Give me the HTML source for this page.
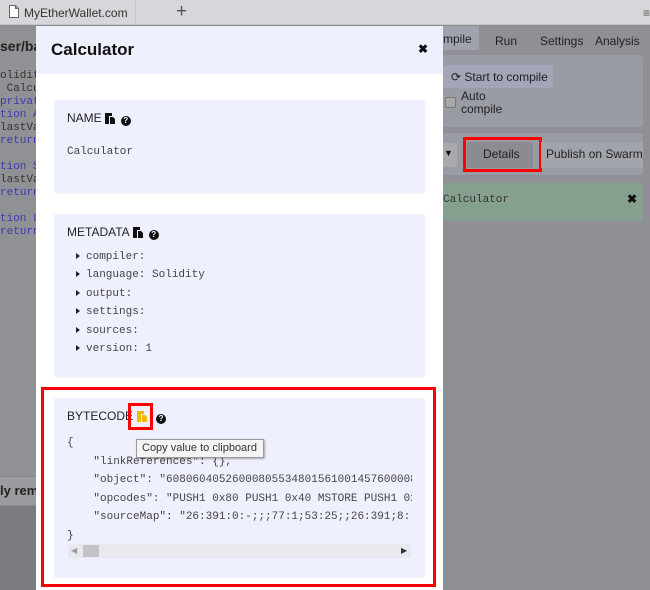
<!DOCTYPE html>
<html><head><meta charset="utf-8"><style>
*{box-sizing:border-box;margin:0;padding:0}
body{width:650px;height:590px;overflow:hidden;position:relative;font-family:"Liberation Sans",sans-serif;background:#8e8f93}
.abs{position:absolute}
.mono{font-family:"Liberation Mono",monospace}
.card{position:absolute;left:54px;width:371px;background:#eef0fd;border-radius:2px}
.lbl{font-size:12px;color:#222;position:absolute;left:13px}
.ic{display:inline-block;vertical-align:-2px;margin-left:3px}
.q{display:inline-block;width:10px;height:10px;border-radius:50%;background:#111;color:#fff;font-size:8px;font-weight:bold;text-align:center;line-height:10px;vertical-align:-1px;margin-left:6px}
.meta div{font-size:11px;color:#444;height:18.4px;line-height:18px}
.meta div:before{content:"";display:inline-block;border-left:4px solid #222;border-top:3.5px solid transparent;border-bottom:3.5px solid transparent;margin-right:6px;vertical-align:0}
</style></head><body>
<div class="abs" style="left:0;top:0;width:650px;height:25px;background:#d6d7da;border-bottom:1px solid #c4c5c8"></div>
<div class="abs" style="left:135px;top:0;width:1px;height:25px;background:#c2c3c6"></div>
<svg class="abs" style="left:9px;top:5px" width="10" height="13"><path d="M.5 .5h6l3 3v9h-9z M6.5 .5v3h3" fill="#fff" stroke="#666"/></svg>
<div class="abs" style="left:24px;top:6px;font-size:12px;color:#333">MyEtherWallet.com</div>
<div class="abs" style="left:176px;top:1px;font-size:19px;color:#555">+</div>
<div class="abs" style="left:643px;top:6px;font-size:12px;color:#555">≡</div>
<div class="abs" style="left:0;top:26px;width:36px;height:450px;background:#909194"></div>
<div class="abs" style="left:0;top:38px;font-size:14px;font-weight:bold;color:#222">ser/ba</div>
<div class="abs mono" style="left:0;top:70px;font-size:11px;line-height:13px;color:#333;white-space:pre">olidit
 Calcu
<span style="color:#3b3bb0">privat</span>
<span style="color:#3b3bb0">tion A</span>
lastVa
<span style="color:#3b3bb0">return</span>

<span style="color:#3b3bb0">tion S</span>
lastVa
<span style="color:#3b3bb0">return</span>

<span style="color:#3b3bb0">tion L</span>
<span style="color:#3b3bb0">return</span></div>
<div class="abs" style="left:0;top:476px;width:36px;height:30px;background:#9b9c9f;border-top:1px solid #888;border-bottom:1px solid #888"></div>
<div class="abs" style="left:0;top:483px;font-size:13px;font-weight:bold;color:#222">ly remi</div>
<div class="abs" style="left:0;top:506px;width:36px;height:84px;background:#7b7c7f"></div>
<div class="abs" style="left:443px;top:26px;width:207px;height:564px;background:#8f9096"></div>
<div class="abs" style="left:443px;top:26px;width:36px;height:24px;background:#a0a3ae"></div>
<div class="abs" style="left:443px;top:32px;font-size:12px;color:#222">mpile</div>
<div class="abs" style="left:495px;top:34px;font-size:12px;color:#222">Run</div>
<div class="abs" style="left:540px;top:34px;font-size:12px;color:#222">Settings</div>
<div class="abs" style="left:595px;top:34px;font-size:12px;color:#222">Analysis</div>
<div class="abs" style="left:443px;top:55px;width:200px;height:72px;background:#9a9ca5;border-radius:3px"></div>
<div class="abs" style="left:443px;top:65px;width:110px;height:23px;background:#a2a6b7;border-radius:3px"></div>
<div class="abs" style="left:451px;top:70px;font-size:12px;color:#222">⟳ Start to compile</div>
<div class="abs" style="left:445px;top:97px;width:11px;height:11px;background:#a8a8a8;border:1px solid #777;border-radius:2px"></div>
<div class="abs" style="left:461px;top:90px;font-size:12px;line-height:13px;color:#222">Auto<br>compile</div>
<div class="abs" style="left:443px;top:133px;width:200px;height:42px;background:#9a9ca5;border-radius:3px"></div>
<div class="abs" style="left:443px;top:143px;width:14px;height:24px;background:#a9a9ad;border-radius:0 3px 3px 0"></div>
<div class="abs" style="left:444px;top:148px;font-size:9px;color:#111">▼</div>
<div class="abs" style="left:467px;top:142px;width:66px;height:26px;background:#8b8c91;border-radius:2px"></div>
<div class="abs" style="left:463px;top:137px;width:79px;height:35px;border:3px solid #f00"></div>
<div class="abs" style="left:483px;top:147px;font-size:12px;color:#222">Details</div>
<div class="abs" style="left:541px;top:142px;width:102px;height:26px;background:#a2a4ab"></div>
<div class="abs" style="left:546px;top:147px;font-size:12px;color:#222">Publish on Swarm</div>
<div class="abs" style="left:443px;top:183px;width:200px;height:38px;background:#86a08f;border-radius:4px"></div>
<div class="abs mono" style="left:443px;top:194px;font-size:11px;color:#333">Calculator</div>
<div class="abs" style="left:627px;top:192px;font-size:12px;font-weight:bold;color:#111">✖</div>
<div class="abs" style="left:36px;top:26px;width:407px;height:564px;background:#fff"></div>
<div class="abs" style="left:36px;top:26px;width:407px;height:48px;background:#eef0fd"></div>
<div class="abs" style="left:51px;top:40px;font-size:17px;font-weight:bold;color:#111">Calculator</div>
<div class="abs" style="left:418px;top:42px;font-size:12px;font-weight:bold;color:#111">✖</div>

<div class="card" style="top:100px;height:93px">
 <div class="lbl" style="top:11px">NAME<svg class="ic" width="10" height="12"><path d="M0 1h7v3h-3v8h-4z M5 5h3l2 2v5h-5z" fill="#111"/></svg><span class="q">?</span></div>
 <div class="abs mono" style="left:13px;top:46px;font-size:11px;color:#444">Calculator</div>
</div>
<div class="card" style="top:214px;height:163px">
 <div class="lbl" style="top:11px">METADATA<svg class="ic" width="10" height="12"><path d="M0 1h7v3h-3v8h-4z M5 5h3l2 2v5h-5z" fill="#111"/></svg><span class="q">?</span></div>
 <div class="meta mono abs" style="left:22px;top:34px">
  <div>compiler:</div><div>language: Solidity</div><div>output:</div><div>settings:</div><div>sources:</div><div>version: 1</div>
 </div>
</div>
<div class="abs" style="left:41px;top:387px;width:395px;height:200px;border:3px solid #f00"></div>
<div class="card" style="top:398px;height:180px">
 <div class="lbl" style="top:11px">BYTECODE<svg class="ic" width="10" height="12" style="margin-left:4px"><path d="M0 1h7v3h-3v8h-4z M5 5h3l2 2v5h-5z" fill="#f5b700"/></svg><span class="q" style="margin-left:9px">?</span></div>
 <div class="abs" style="left:74px;top:5px;width:25px;height:27px;border:3px solid #f00"></div>
 <pre class="abs mono" style="left:13px;top:36px;font-size:11px;line-height:18.5px;color:#444;width:345px;overflow:hidden">{
    "linkReferences": {},
    "object": "608060405260008055348015610014576000080
    "opcodes": "PUSH1 0x80 PUSH1 0x40 MSTORE PUSH1 0x0
    "sourceMap": "26:391:0:-;;;77:1;53:25;;26:391;8:
}</pre>
 <div class="abs" style="left:14px;top:146px;width:343px;height:14px;background:#e8e9ef"></div>
 <div class="abs" style="left:17px;top:148px;font-size:8px;color:#999">◀</div>
 <div class="abs" style="left:29px;top:147px;width:16px;height:12px;background:#c2c3c8"></div>
 <div class="abs" style="left:347px;top:148px;font-size:8px;color:#333">▶</div>
</div>
<div class="abs" style="left:136px;top:439px;width:128px;height:19px;background:#f4f4f4;border:1px solid #999;box-shadow:1px 1px 2px rgba(0,0,0,.3);font-size:11px;color:#333;padding:2px 5px">Copy value to clipboard</div>
</body></html>
